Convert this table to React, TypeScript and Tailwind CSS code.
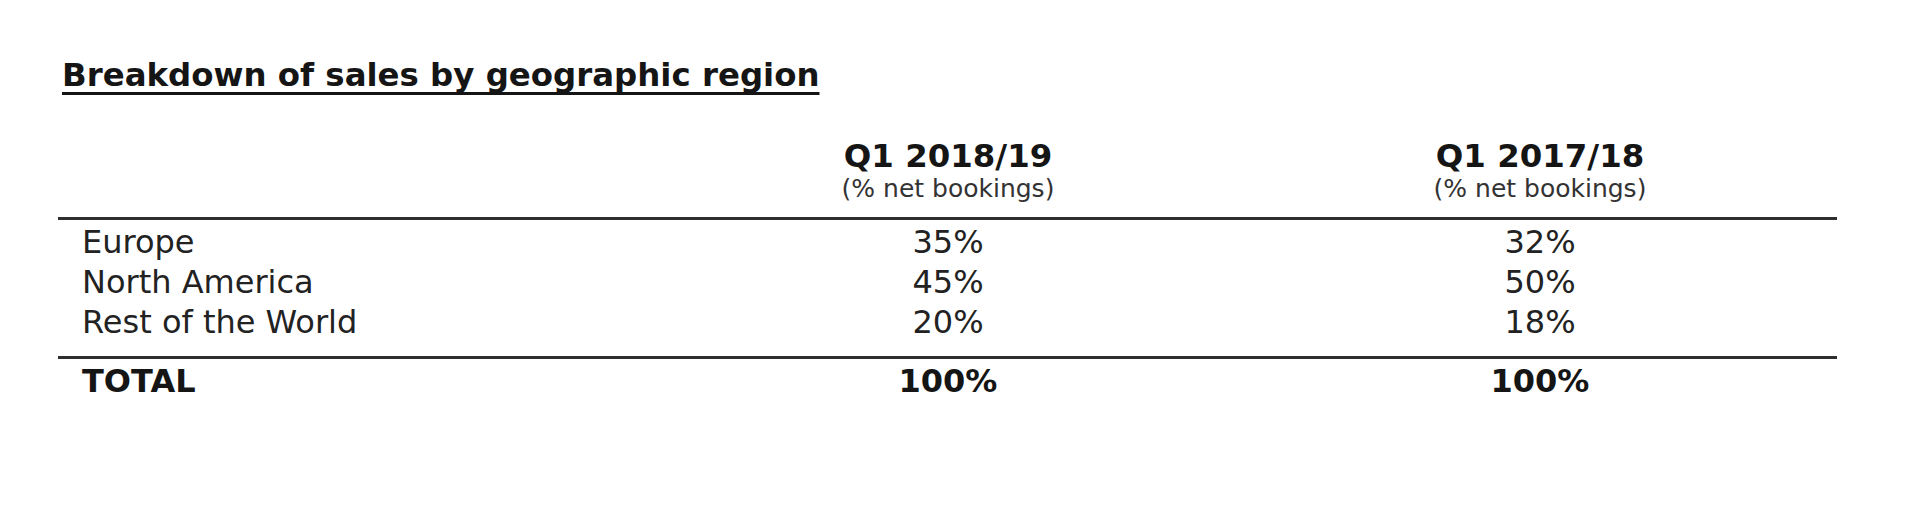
const rows = [
  { region: 'Europe', current: '35%', previous: '32%' },
  { region: 'North America', current: '45%', previous: '50%' },
  { region: 'Rest of the World', current: '20%', previous: '18%' },
];

const periods = ['Q1 2018/19', 'Q1 2017/18'];

export default function App() {
  return (
    <div className="min-h-[509px] w-[1920px] bg-white pl-[58px] pt-[55px] font-['DejaVu_Sans',sans-serif] text-[#222]">
      <h2 className="pl-[4px] text-[32.4px] font-bold leading-[40px] text-[#151515] underline decoration-[3px] underline-offset-[6px] [text-decoration-skip-ink:none]">
        Breakdown of sales by geographic region
      </h2>

      <div className="mt-[43px] w-[1779px]">
        <div className="grid grid-cols-[595px_590px_594px] pb-[13px]">
          <div />
          {periods.map((p) => (
            <div key={p} className="flex flex-col items-center">
              <span className="text-[32.4px] font-bold leading-[36px] text-[#151515]">{p}</span>
              <span className="text-[25px] leading-[30px] text-[#333]">(% net bookings)</span>
            </div>
          ))}
        </div>

        <div className="border-t-[3px] border-[#2e2e2e] pt-[2px] pb-[14px]">
          {rows.map((r) => (
            <div key={r.region} className="grid grid-cols-[595px_590px_594px] text-[32px] leading-[40px]">
              <span className="pl-[24px]">{r.region}</span>
              <span className="text-center">{r.current}</span>
              <span className="text-center">{r.previous}</span>
            </div>
          ))}
        </div>

        <div className="grid grid-cols-[595px_590px_594px] border-t-[3px] border-[#2e2e2e] pt-[2px] text-[32px] font-bold leading-[40px] text-[#151515]">
          <span className="pl-[24px]">TOTAL</span>
          <span className="text-center">100%</span>
          <span className="text-center">100%</span>
        </div>
      </div>
    </div>
  );
}
